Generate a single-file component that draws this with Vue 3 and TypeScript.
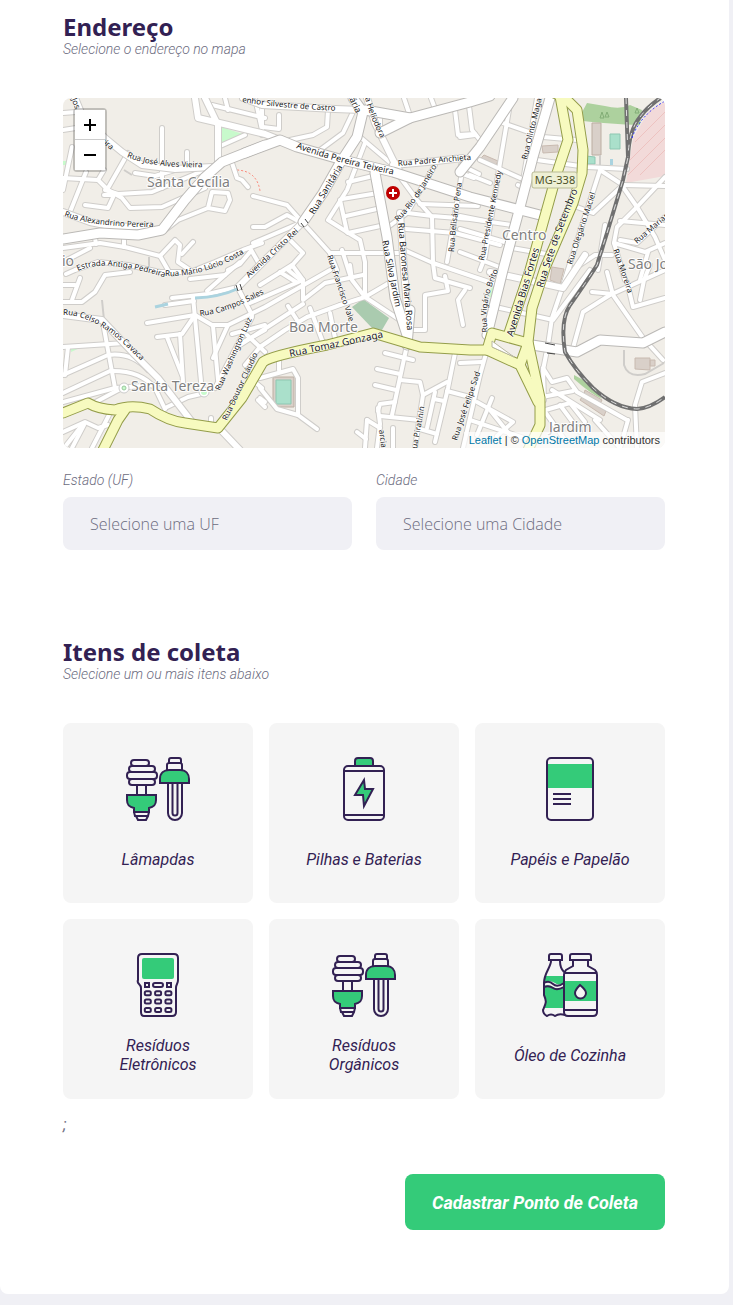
<script setup lang="ts">
import { ref } from 'vue'

type RoadKind = 'minor' | 'street' | 'avenue' | 'highway'

interface Label {
  text: string
  d: string
  size?: number
}

interface Item {
  id: number
  title: string
  icon: 'lamps' | 'battery' | 'paper' | 'device' | 'oil'
}

const uf = ref('')
const city = ref('')
const selected = ref<number[]>([])

const items: Item[] = [
  { id: 1, title: 'Lâmapdas', icon: 'lamps' },
  { id: 2, title: 'Pilhas e Baterias', icon: 'battery' },
  { id: 3, title: 'Papéis e Papelão', icon: 'paper' },
  { id: 4, title: 'Resíduos Eletrônicos', icon: 'device' },
  { id: 5, title: 'Resíduos Orgânicos', icon: 'lamps' },
  { id: 6, title: 'Óleo de Cozinha', icon: 'oil' },
]

function toggle(id: number) {
  selected.value = selected.value.includes(id)
    ? selected.value.filter((other) => other !== id)
    : [...selected.value, id]
}

const roads: Record<RoadKind, string[]> = {
  minor: [
    'M162 128V188', 'M187 152V167', 'M135 173L155 176L175 170L190 168', 'M128 153L108 188',
    'M63 178L98 180L108 190L122 198L130 208L162 207L205 188', 'M105 190L118 194L152 192L188 177L212 167',
    'M85 205L108 208L114 195L104 195', 'M70 212L86 172', 'M63 190L72 147', 'M63 113L76 112', 'M63 130L76 128',
    'M98 180L104 170', 'M208 208L212 192L228 193L230 200L225 211L208 208L178 220L165 230', 'M232 163L237 178L242 180L248 187',
    'M212 105L265 118', 'M225 98L228 110', 'M255 98L262 130', 'M218 147L245 135', 'M253 227L265 227L287 215L300 222',
    'M253 196L287 205L303 223L330 253', 'M63 248L100 243L125 247L160 256L175 240L180 245L178 262L190 270',
    'M63 262L90 248', 'M94 232L96 244', 'M124 233V247', 'M160 256L168 270', 'M253 243L300 223', 'M182 254L193 242',
    'M66 274L75 270L98 262L128 265L160 272L190 272L215 262L243 250L262 243', 'M250 248L258 262', 'M228 270L240 264L250 252',
    'M190 279L225 275L240 262', 'M207 291L225 275', 'M290 240L303 253L288 270L303 282V300L325 283L363 275', 'M280 272L296 282',
    'M328 110L327 127L313 135L290 140', 'M353 112L343 133L320 150', 'M262 105V135', 'M263 127L279 129V115',
    'M360 137L393 165', 'M365 143L347 190L328 220L347 232L360 240L365 262L365 297', 'M340 200L347 232', 'M348 182L373 176',
    'M342 199L378 193', 'M346 216L381 208', 'M348 233L385 225', 'M380 115V127L385 133', 'M455 110L458 135L475 134',
    'M404 98L409 113', 'M431 98L434 106', 'M435 165L407 213L388 227', 'M400 177L417 200L432 217L433 262', 'M400 212L432 216L470 219L512 225',
    'M420 204L478 206', 'M406 229L455 233L500 245', 'M404 250L433 263L495 284', 'M330 253H403', 'M463 165L458 197L447 262',
    'M461 165L479 174', 'M470 175L490 183', 'M463 174L474 178', 'M330 253L337 270', 'M342 250L350 275', 'M503 123L543 137L577 140',
    'M511 98L500 163L485 257L480 270', 'M537 98L522 187L518 185', 'M480 140L472 130L468 98', 'M460 137L475 135', 'M480 160L520 178',
    'M460 216L485 221', 'M460 229L508 243', 'M460 252L502 268', 'M512 248L552 255', 'M537 160L587 167L627 169', 'M600 170L570 263L562 290',
    'M600 170L623 185', 'M577 207L593 213L623 185', 'M623 185L665 186', 'M623 187L637 207L655 237L665 260', 'M665 177L637 207L617 227L614 243L625 280',
    'M665 217L637 243L620 240', 'M620 221L665 225', 'M614 243L645 252L665 243', 'M605 225L598 270', 'M648 252L640 280', 'M572 270L595 255L612 255',
    'M570 265L552 318L548 345L543 370L544 400', 'M500 308L553 320L590 270', 'M573 348L583 312L610 295L665 270', 'M607 272L613 295L643 338L663 360',
    'M627 282L633 307L665 298', 'M640 300L644 280L650 265', 'M592 292L613 294', 'M637 448L635 405L642 382L665 373', 'M543 368L552 382L567 378L577 392L627 420',
    'M542 397L573 391', 'M542 411L570 403L585 422', 'M543 409L565 440', 'M560 405L580 432', 'M595 420L620 448L628 420', 'M552 390L600 420',
    'M487 350L480 375L463 448', 'M492 398L477 435', 'M477 402L513 422L497 436', 'M470 420L530 440', 'M490 410L510 435', 'M460 363L482 362',
    'M407 345L392 415', 'M385 353L413 360', 'M377 369L400 374', 'M375 385L396 390', 'M378 411L380 404L395 402', 'M380 416L420 420',
    'M400 380L420 382L423 395L415 448', 'M423 395L447 382', 'M455 353L448 388L435 442', 'M447 391L470 397', 'M435 392L427 428', 'M434 399L444 401',
    'M420 429L437 434', 'M378 408L380 424L377 448', 'M367 420L365 448', 'M367 420L380 428', 'M357 432L366 439', 'M393 428V448',
    'M433 263L435 278L470 288', 'M445 276L448 291L425 295V330L413 330', 'M465 290L458 300L463 325', 'M340 305L307 317L285 330L260 347L245 365', 'M365 297L340 305', 'M365 297L403 322', 'M365 297L389 283',
    'M350 265L352 280L365 297', 'M260 285L292 265L303 280', 'M240 345L303 304', 'M250 303L303 280', 'M288 306L297 320', 'M310 308L322 340', 'M330 313L335 338',
    'M279 358V370', 'M260 378L293 369L298 378V415L317 429', 'M298 415L277 409L260 388', 'M250 378L262 388', 'M258 400L265 407',
    'M63 302H82L95 292L105 275L130 272', 'M63 285H75', 'M72 300L80 278', 'M103 323L115 388', 'M63 347L125 343', 'M68 347L65 375', 'M63 375L108 355Q132 352 148 370',
    'M63 393L110 371Q140 370 155 388L165 409', 'M63 402L115 388L155 385', 'M90 405L122 388', 'M165 408L188 397L205 393', 'M147 323L195 315L212 325H228L265 307L330 270',
    'M193 297L202 392', 'M157 337L182 334L193 318', 'M180 334L183 382', 'M167 337L182 375', 'M213 326L218 380', 'M228 325L213 358', 'M165 305L194 301',
    'M252 317L215 388', 'M238 288L252 315', 'M232 334L265 325', 'M247 335L265 352', 'M240 344L265 330', 'M211 418V426', 'M63 432L85 422L98 428L108 425',
    'M84 425L72 448', 'M109 415L92 448', 'M64 448L83 424', 'M172 298L208 294L238 287', 'M260 398L265 402',
  ],
  street: [
    'M75 98L82 115L105 138L122 152L142 165L175 169L212 167', 'M205 98L218 125V162', 'M195 98L198 118L228 125L265 134L297 147',
    'M243 98L262 105L335 109L362 110', 'M367 98L375 123L393 160L400 172', 'M393 165L427 162L463 158', 'M63 212L90 222L115 227L150 226',
    'M63 315L102 320L135 355L158 378L192 422', 'M400 213L404 270L409 332', 'M220 429L240 450', 'M490 272L563 288L585 255', 'M303 222L275 250L250 275L238 287',
  ],
  avenue: [
    'M265 145L222 162L205 177L185 200L162 230L138 235L100 233L63 239', 'M245 153L280 140L297 147L343 160L393 172L427 183L470 197L540 215',
    'M353 98L363 112L357 137L340 163L323 193L303 222', 'M365 110L410 118L470 102L490 96', 'M380 133L410 118', 'M375 173L387 237L395 298L407 335', 'M407 345L410 310',
    'M513 98L480 147L460 172', 'M550 98L533 157L520 207L503 270L487 335', 'M532 345L577 352L600 340L643 343L665 332',
  ],
  highway: [
    'M560 96L568 140L557 173L543 223L530 270L508 336', 'M552 92L565 98L577 110L583 150L582 173L573 203L557 240L545 268L532 308L528 342L540 398L540 425L528 450',
    'M125 410L118 420L103 450', 'M63 413L88 403Q98 409 115 410Q130 404 150 409Q168 421 185 423L218 428L242 398L263 362Q270 356 327 345L373 333L420 347L470 350L487 350L520 365L538 402',
    'M487 350L492 333L528 343L520 365',
  ],
}

const rails = [
  'M626 98L628 157L623 180L607 233L597 265Q583 287 570 305Q560 320 565 352Q575 370 593 388Q615 408 637 409Q650 408 665 397',
  'M662 97Q648 106 640 117Q629 130 628 157',
]

const labels: Label[] = [
  { text: 'Rua José Alves Vieira', d: 'M127 157Q155 169 206 167' },
  { text: 'enhor Silvestre de Castro', d: 'M242 102Q285 109 345 111' },
  { text: 'Rua Alexandrino Pereira', d: 'M64 216Q95 228 160 227' },
  { text: 'Estrada Antiga Pedreira', d: 'M78 271Q105 257 176 281' },
  { text: 'Rua Mário Lúcio Costa', d: 'M165 276Q205 278 250 250' },
  { text: 'Avenida Cristo Rei', d: 'M249 278L305 226' },
  { text: 'Rua Campos Sales', d: 'M200 316Q230 313 270 290' },
  { text: 'Rua Celso Ramos Cavaca', d: 'M63 315Q98 314 142 362' },
  { text: 'Rua Washington Luiz', d: 'M220 391L256 310' },
  { text: 'Rua Doutor Cláudio', d: 'M227 421L262 345' },
  { text: 'Rua Sanitária', d: 'M314 215L347 160', size: 9 },
  { text: 'Avenida Pereira Teixeira', d: 'M296 148Q340 164 400 176', size: 9 },
  { text: 'tária', d: 'M348 96L358 118', size: 9 },
  { text: 'a Heliodora', d: 'M365 98Q371 121 384 144' },
  { text: 'Rua Padre Anchieta', d: 'M398 166L480 159' },
  { text: 'Rua Rio de Janeiro', d: 'M398 222Q420 200 440 160' },
  { text: 'Rua Belisário Pena', d: 'M454 252Q456 220 464 170' },
  { text: 'Rua Presidente Kennedy', d: 'M484 261L504 160' },
  { text: 'Rua Olinto Maga', d: 'M527 160L544 90' },
  { text: 'Rua Francisco Vale', d: 'M327 256L352 330' },
  { text: 'Rua Silva Jardim', d: 'M382 241L397 315', size: 9 },
  { text: 'Rua Baronesa Maria Rosa', d: 'M398 223L408 340', size: 9 },
  { text: 'Rua Tomaz Gonzaga', d: 'M290 357L390 336', size: 10 },
  { text: 'Avenida Bias Fortes', d: 'M513 337L542 240', size: 10 },
  { text: 'Rua Sete de Setembro', d: 'M543 288Q556 243 584 175', size: 10 },
  { text: 'Rua Olegário Maciel', d: 'M572 265L600 180' },
  { text: 'Rua Vigário Brito', d: 'M488 332Q482 300 502 263' },
  { text: 'Rua Mariana', d: 'M637 244L680 207' },
  { text: 'Rua Moreira', d: 'M613 250L632 305' },
  { text: 'Rua José Felipe Sad', d: 'M457 441L484 362' },
  { text: 'ua Piratinin', d: 'M417 449L426 398' },
  { text: 'arcia', d: 'M379 430L382 455' },
  { text: 'eira', d: 'M100 141L120 158' },
  { text: 'a Jos', d: 'M69 93L78 116' },
]

const places = [
  { text: 'Santa Cecília', x: 147, y: 187 },
  { text: 'Santa Tereza', x: 131, y: 391 },
  { text: 'Boa Morte', x: 289, y: 332 },
  { text: 'Centro', x: 502, y: 240 },
  { text: 'São José', x: 628, y: 269 },
  { text: 'Jardim', x: 549, y: 432 },
  { text: 'io', x: 62, y: 266 },
]
</script>

<template>
  <main class="page">
    <form class="sheet" @submit.prevent>
      <section class="group">
        <h2>Endereço</h2>
        <p class="hint">Selecione o endereço no mapa</p>

        <div class="map">
          <svg class="map-art" viewBox="63 98 602 350" preserveAspectRatio="xMidYMid slice" role="img" aria-label="Mapa">
            <rect x="63" y="98" width="602" height="350" fill="#f1eee8" />
            <path d="M580 116L587 103L605 106Q620 110 630 105L642 110L640 125Q610 124 583 121Z" fill="#add19e" />
            <path d="M665 101L648 112L633 138L626 183L665 176Z" fill="#f2dad9" />
            <path d="M630 160L665 125M628 175L665 138M640 175L665 150M635 142L665 112" stroke="#edc2c0" fill="none" />
            <path d="M592 123H601V155H592Z" fill="#d9d0c9" stroke="#bcaea2" />
            <path d="M610 134H620V149H610ZM586 156L595 157V164H586Z" fill="#aae0cb" stroke="#8dc7b2" />
            <path d="M610 159H613V165H610Z" fill="#aad3df" />
            <path d="M542 146L558 145V152L543 153ZM484 155L498 161L496 165L481 158ZM552 267L564 269L560 284L550 280Z" fill="#d9d0c9" stroke="#c8bab0" />
            <path d="M221 127L243 134L221 144Z" fill="#c8facc" />
            <path d="M63 161H69L67 165H63ZM103 235L113 235L105 238ZM490 290L498 280L494 297H489ZM71 348L84 346L71 352Z" fill="#c8facc" />
            <path d="M352 307L363 299L389 318L382 330L372 328Z" fill="#aacbaf" />
            <path d="M574 375Q590 382 602 399Q591 394 574 379Z" fill="#add19e" />
            <path d="M585 390L602 400L600 404L584 394ZM582 397L606 411L604 416L580 400ZM635 358H650V370L635 369ZM650 360H655V366H650Z" fill="#d9d0c9" stroke="#c8bab0" />
            <path d="M273 377H294V407H273Z" fill="#d9d0c9" stroke="#bcaea2" />
            <path d="M276 380H291V404H276Z" fill="#aae0cb" stroke="#8dc7b2" />
            <path d="M237 170Q257 171 260 191" fill="none" stroke="#fa8072" stroke-dasharray="2 2" />
            <path d="M124 170L132 175M102 300L104 320M149 257V268M624 350V365Q628 378 645 374L664 363M600 155V170" fill="none" stroke="#cfcdca" stroke-width="2" />

            <g v-for="(paths, kind) in roads" :key="kind" :class="['road', kind]">
              <path v-for="d in paths" :key="d" class="casing" :d="d" />
              <path v-for="d in paths" :key="d + 'f'" class="fill" :d="d" />
            </g>
            <path d="M155 307L168 304M195 298Q220 297 237 289" fill="none" stroke="#aad3df" stroke-width="3" />
            <path d="M492 341L514 357L492 347Z" fill="#fff" stroke="#b8b8a0" />
            <circle cx="124" cy="388" r="5" fill="#fff" stroke="#ccc" />
            <circle cx="124" cy="388" r="2" fill="#c8facc" stroke="#9bc99f" />
            <circle cx="204" cy="392" r="5" fill="#fff" stroke="#ccc" />
            <circle cx="204" cy="392" r="3" fill="#c8facc" />
            <path d="M301 223L304 227M305 219L308 223M236 285L238 291M240 284L242 290M545 343L555 345M547 353L555 354" stroke="#444" fill="none" />

            <g v-for="d in rails" :key="d" class="rail">
              <path class="rail-bed" :d="d" />
              <path class="rail-dash" :d="d" />
            </g>
            <path d="M632 138Q640 115 665 101" fill="none" stroke="#2929ff" stroke-dasharray="2 2" />
            <path d="M600 118L602 112L604 118ZM605 117L607 112L609 117ZM635 113L637 108L639 113Z" fill="none" stroke="#82ad76" />

            <text v-for="place in places" :key="place.text" class="place" :x="place.x" :y="place.y">{{ place.text }}</text>
            <g v-for="(label, i) in labels" :key="i">
              <path :id="`street-${i}`" :d="label.d" fill="none" />
              <text class="street-name" :font-size="label.size ?? 8">
                <textPath :href="`#street-${i}`">{{ label.text }}</textPath>
              </text>
            </g>
            <rect x="532" y="172" width="45" height="16" rx="2" fill="#eef0d5" stroke="#b9bb96" />
            <text class="shield" x="555" y="184" text-anchor="middle">MG-338</text>
            <circle cx="393" cy="193" r="7" fill="#bf0000" />
            <path d="M393 189V197M389 193H397" stroke="#fff" stroke-width="2" />
          </svg>

          <div class="zoom">
            <button type="button" aria-label="Aproximar">
              <svg viewBox="0 0 14 14"><path d="M7 1V13M1 7H13" /></svg>
            </button>
            <button type="button" aria-label="Afastar">
              <svg viewBox="0 0 14 14"><path d="M1 7H13" /></svg>
            </button>
          </div>
          <div class="credit">
            <a href="#leaflet">Leaflet</a> | © <a href="#osm">OpenStreetMap</a> contributors
          </div>
        </div>

        <div class="fields">
          <div class="field">
            <label for="uf">Estado (UF)</label>
            <select id="uf" v-model="uf">
              <option value="">Selecione uma UF</option>
            </select>
          </div>
          <div class="field">
            <label for="city">Cidade</label>
            <select id="city" v-model="city">
              <option value="">Selecione uma Cidade</option>
            </select>
          </div>
        </div>
      </section>

      <section class="group">
        <h2>Itens de coleta</h2>
        <p class="hint">Selecione um ou mais itens abaixo</p>

        <div class="items">
          <button
            v-for="item in items"
            :key="item.id"
            type="button"
            class="item"
            :class="{ selected: selected.includes(item.id) }"
            :aria-pressed="selected.includes(item.id)"
            @click="toggle(item.id)"
          >
            <svg v-if="item.icon === 'lamps'" class="icon" viewBox="0 0 64 64" aria-hidden="true">
              <rect x="5" y="3" width="18" height="6" rx="3" />
              <rect x="3" y="9" width="26" height="6" rx="3" />
              <rect x="1" y="15" width="30" height="7" rx="3" />
              <rect x="3" y="22" width="26" height="6" rx="3" />
              <path d="M11 28V38M20 28V38" />
              <path class="green" d="M1 38H30V43C30 48 28 50 23 51V55H8V51C3 50 1 48 1 43Z" />
              <path d="M8 55L9 59H22L23 55M10 59L12 63H20L22 59" />
              <path d="M43 6V3Q43 1 45 1H53Q55 1 55 3V6M41 13V8Q41 6 43 6H54Q56 6 56 8V13" />
              <path d="M42 26V56A7 7 0 0 0 56 56V26M46.500 26V56A2.500 2.500 0 0 0 51.500 56V26" />
              <path class="green" d="M34 26V22C34 16 38 13 43 13H54C60 13 63 17 63 22V26Z" />
            </svg>
            <svg v-else-if="item.icon === 'battery'" class="icon" viewBox="0 0 64 64" aria-hidden="true">
              <path class="green" d="M23 9V4Q23 1 26 1H38Q41 1 41 4V9Z" />
              <rect x="12" y="9" width="40" height="54" rx="4" />
              <path d="M12 14H52M12 58H52" />
              <path class="green" d="M32 23L23 38H31L32 49L41 32H33Z" />
            </svg>
            <svg v-else-if="item.icon === 'paper'" class="icon" viewBox="0 0 64 64" aria-hidden="true">
              <rect class="tint" x="9" y="7" width="46" height="24" />
              <rect x="9" y="1" width="46" height="62" rx="4" />
              <path d="M15 37H33M15 42H33M15 47H33" />
            </svg>
            <svg v-else-if="item.icon === 'device'" class="icon" viewBox="0 0 64 64" aria-hidden="true">
              <path d="M16 1H48Q52 1 52 5V27Q52 29 51 31T50 35V59Q50 63 46 63H18Q15 63 15 59V35Q15 33 13 31T12 27V5Q12 1 16 1Z" />
              <rect class="tint" x="16" y="5" width="32" height="21" rx="2" />
              <rect x="19" y="30" width="4" height="4" />
              <rect x="27" y="30" width="10" height="4" rx="2" />
              <rect x="41" y="30" width="4" height="4" />
              <g v-for="row in 3" :key="row">
                <rect v-for="col in 3" :key="col" :x="8.5 + col * 10.3" :y="30 + row * 8.3" width="6" height="4" rx="1.5" />
              </g>
            </svg>
            <svg v-else class="icon" viewBox="0 0 64 64" aria-hidden="true">
              <path class="tint" d="M8 23H26V30Q21 33 17 30T6 29Q6 26 8 23ZM6 33Q11 31 15 34T26 34V55H6Q9 48 6 43Z" />
              <path d="M11 7V3Q11 1 13 1H22Q24 1 24 3V7ZM13 8C13 14 6 20 6 30V42C9 49 8 50 5 57Q5 61 9 63Q13 60 17 63Q21 60 27 62M22 8Q22 15 26 19" />
              <path d="M6 30Q11 27 15 31T26 30M6 34Q11 32 15 35T26 34" />
              <path class="tint" d="M26 28H60V48H26Z" />
              <path d="M34 1H51Q53 1 53 3V7H32V3Q32 1 34 1ZM35 8V13L28 17Q26 19 26 22V59Q26 63 30 63H55Q59 63 59 59V22Q59 19 57 17L50 13V8M26 20H59M26 57H59" />
              <path class="drop" d="M42 32Q37 37 37 40A5 5 0 0 0 48 40Q48 37 42 32Z" />
            </svg>
            <span>{{ item.title }}</span>
          </button>
        </div>
        <p class="stray">;</p>
      </section>

      <button class="submit" type="submit">Cadastrar Ponto de Coleta</button>
    </form>
  </main>
</template>

<style>
body {
  margin: 0;
  background: #f0f0f5;
}
</style>

<style scoped>
.page {
  padding: 0 4px 11px 0;
  font-family: Roboto, sans-serif;
  color: #6c6c80;
}
.sheet {
  display: flex;
  flex-direction: column;
  padding: 13px 64px 64px 63px;
  background: #fff;
  border-radius: 0 0 8px 8px;
}
.group + .group {
  margin-top: 88px;
}
h2 {
  margin: 0;
  color: #322153;
  font: 700 24px/28px "Noto Sans", sans-serif;
}
.hint {
  margin: 0 0 40px;
  font-size: 14px;
  font-style: italic;
  font-weight: 300;
  line-height: 17px;
}
.map {
  position: relative;
  height: 350px;
  overflow: hidden;
  border-radius: 8px;
}
.map-art {
  display: block;
  width: 100%;
  height: 100%;
}
.road path {
  fill: none;
  stroke-linecap: round;
  stroke-linejoin: round;
}
.road .casing {
  stroke: #cfcdca;
}
.road .fill {
  stroke: #fff;
}
.minor .casing {
  stroke-width: 6px;
}
.minor .fill {
  stroke-width: 4px;
}
.street .casing {
  stroke-width: 8px;
}
.street .fill {
  stroke-width: 6px;
}
.avenue .casing {
  stroke: #bbb9b6;
  stroke-width: 11px;
}
.avenue .fill {
  stroke-width: 9px;
}
.highway .casing {
  stroke: #949d4a;
  stroke-width: 11px;
}
.highway .fill {
  stroke: #f7fabf;
  stroke-width: 9px;
}
.rail path {
  fill: none;
}
.rail-bed {
  stroke: #707070;
  stroke-width: 4px;
}
.rail-dash {
  stroke: #ddd;
  stroke-width: 1px;
  stroke-dasharray: 6 6;
}
.place,
.street-name,
.shield {
  font-family: "Noto Sans", sans-serif;
  paint-order: stroke;
  stroke: #fff;
  stroke-width: 2px;
  stroke-linejoin: round;
}
.place {
  fill: #808080;
  font-size: 14px;
}
.street-name {
  fill: #222;
  stroke-width: 1px;
}
.shield {
  fill: #4d5229;
  stroke: none;
  font-size: 11px;
}
.zoom {
  position: absolute;
  top: 10px;
  left: 10px;
  border: 2px solid rgba(0, 0, 0, 0.2);
  border-radius: 4px;
  background-clip: padding-box;
}
.zoom button {
  display: flex;
  align-items: center;
  justify-content: center;
  width: 30px;
  height: 30px;
  padding: 0;
  border: 0;
  background: #fff;
}
.zoom button:first-child {
  border-bottom: 1px solid #ccc;
}
.zoom svg {
  width: 14px;
  height: 14px;
  stroke: #000;
  stroke-width: 2px;
}
.credit {
  position: absolute;
  right: 0;
  bottom: 0;
  padding: 0 5px;
  background: rgba(255, 255, 255, 0.7);
  color: #333;
  font: 11px/16px "Liberation Sans", Arial, sans-serif;
}
.credit a {
  color: #0078a8;
  text-decoration: none;
}
.fields {
  display: grid;
  grid-template-columns: 1fr 1fr;
  gap: 24px;
  margin-top: 24px;
}
.field {
  display: flex;
  flex-direction: column;
  gap: 8px;
}
.field label {
  font-size: 14px;
  font-style: italic;
  font-weight: 300;
  line-height: 17px;
}
.field select {
  appearance: none;
  width: 100%;
  height: 53px;
  padding: 0 27px;
  border: 0;
  border-radius: 8px;
  background: #f0f0f5;
  color: #6c6c80;
  font: 300 16px "Open Sans", sans-serif;
}
.items {
  display: grid;
  grid-template-columns: repeat(3, 1fr);
  gap: 16px;
}
.item {
  display: flex;
  flex-direction: column;
  align-items: center;
  height: 180px;
  padding: 32px 28px 16px;
  border: 2px solid #f5f5f5;
  border-radius: 8px;
  background: #f5f5f5;
  color: #322153;
  font: italic 16px/19px Roboto, sans-serif;
  cursor: pointer;
}
.item.selected {
  border-color: #34cb79;
  background: #e1faec;
}
.item span {
  display: flex;
  flex: 1;
  align-items: center;
  margin-top: 12px;
}
.icon {
  flex: none;
  width: 64px;
  height: 64px;
  fill: none;
  stroke: #322153;
  stroke-width: 2px;
}
.green {
  fill: #34cb79;
}
.tint {
  fill: #34cb79;
  stroke: none;
}
.drop {
  fill: #f5f5f5;
}
.stray {
  margin: 16px 0 40px;
  font-size: 16px;
  font-style: italic;
  line-height: 19px;
}
.submit {
  align-self: flex-end;
  width: 260px;
  height: 56px;
  padding: 0;
  border: 0;
  border-radius: 8px;
  background: #34cb79;
  color: #fff;
  font: italic 700 18px Roboto, sans-serif;
  cursor: pointer;
}
</style>
